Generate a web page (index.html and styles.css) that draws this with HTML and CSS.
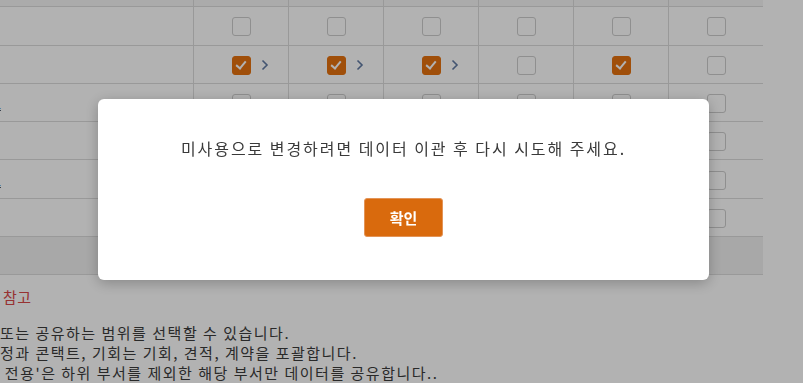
FILE: index.html
```html
<!DOCTYPE html>
<html>
<head>
<meta charset="utf-8">
<title>권한 설정</title>
<link rel="stylesheet" href="styles.css">
</head>
<body>
<div class="page">
  <div class="grid">
    <div class="row head">
      <div class="cell label"></div>
      <div class="cell"></div><div class="cell"></div><div class="cell"></div>
      <div class="cell"></div><div class="cell"></div><div class="cell"></div>
    </div>
    <div class="row">
      <div class="cell label"></div>
      <div class="cell"><span class="chk"></span></div>
      <div class="cell"><span class="chk"></span></div>
      <div class="cell"><span class="chk"></span></div>
      <div class="cell"><span class="chk"></span></div>
      <div class="cell"><span class="chk"></span></div>
      <div class="cell"><span class="chk"></span></div>
    </div>
    <div class="row">
      <div class="cell label"></div>
      <div class="cell"><span></span><span class="chk on"></span><span class="more"><svg width="8" height="12" viewBox="0 0 8 12"><path d="M1.5 1.5l4.5 4.5-4.5 4.5" fill="none" stroke="#607aa3" stroke-width="1.6"/></svg></span></div>
      <div class="cell"><span></span><span class="chk on"></span><span class="more"><svg width="8" height="12" viewBox="0 0 8 12"><path d="M1.5 1.5l4.5 4.5-4.5 4.5" fill="none" stroke="#607aa3" stroke-width="1.6"/></svg></span></div>
      <div class="cell"><span></span><span class="chk on"></span><span class="more"><svg width="8" height="12" viewBox="0 0 8 12"><path d="M1.5 1.5l4.5 4.5-4.5 4.5" fill="none" stroke="#607aa3" stroke-width="1.6"/></svg></span></div>
      <div class="cell"><span class="chk"></span></div>
      <div class="cell"><span class="chk on"></span></div>
      <div class="cell"><span class="chk"></span></div>
    </div>
    <div class="row">
      <div class="cell label"><span class="cut">콘택트</span></div>
      <div class="cell"><span class="chk"></span></div>
      <div class="cell"><span class="chk"></span></div>
      <div class="cell"><span class="chk"></span></div>
      <div class="cell"><span class="chk"></span></div>
      <div class="cell"><span class="chk"></span></div>
      <div class="cell"><span class="chk"></span></div>
    </div>
    <div class="row">
      <div class="cell label"></div>
      <div class="cell"><span class="chk"></span></div>
      <div class="cell"><span class="chk"></span></div>
      <div class="cell"><span class="chk"></span></div>
      <div class="cell"><span class="chk"></span></div>
      <div class="cell"><span class="chk"></span></div>
      <div class="cell"><span class="chk"></span></div>
    </div>
    <div class="row">
      <div class="cell label"><span class="cut">콘택트</span></div>
      <div class="cell"><span class="chk"></span></div>
      <div class="cell"><span class="chk"></span></div>
      <div class="cell"><span class="chk"></span></div>
      <div class="cell"><span class="chk"></span></div>
      <div class="cell"><span class="chk"></span></div>
      <div class="cell"><span class="chk"></span></div>
    </div>
    <div class="row">
      <div class="cell label"></div>
      <div class="cell"><span class="chk"></span></div>
      <div class="cell"><span class="chk"></span></div>
      <div class="cell"><span class="chk"></span></div>
      <div class="cell"><span class="chk"></span></div>
      <div class="cell"><span class="chk"></span></div>
      <div class="cell"><span class="chk"></span></div>
    </div>
    <div class="row foot">
      <div class="cell label"></div>
      <div class="cell"></div><div class="cell"></div><div class="cell"></div>
      <div class="cell"></div><div class="cell"></div><div class="cell"></div>
    </div>
  </div>

  <div class="notes">
    <p class="notes-title">참고</p>
    <p>또는 공유하는 범위를 선택할 수 있습니다.</p>
    <p>정과 콘택트, 기회는 기회, 견적, 계약을 포괄합니다.</p>
    <p>&nbsp;전용'은 하위 부서를 제외한 해당 부서만 데이터를 공유합니다..</p>
  </div>
</div>

<div class="dim"></div>
<div class="modal">
  <p class="modal-msg">미사용으로 변경하려면 데이터 이관 후 다시 시도해 주세요.</p>
  <button class="btn-ok" type="button">확인</button>
</div>
</body>
</html>
```

FILE: styles.css
```css
body {
  margin: 0;
  background: #ffffff;
  font-family: "Noto Sans CJK KR", "Noto Sans", sans-serif;
  overflow: hidden;
}
.page {
  margin-top: -31px;
  width: 803px;
}
.grid {
  width: 763px;
}
.row {
  display: grid;
  grid-template-columns: 193px repeat(6, 95px);
  height: 38.3px;
}
.row.head {
  background: #f5f5f5;
}
.row.foot {
  background: #f1f1f1;
}
.cell {
  box-sizing: border-box;
  border-bottom: 1px solid #dcdcdc;
  border-left: 1px solid #dcdcdc;
  display: grid;
  grid-template-columns: 1fr auto 1fr;
  align-items: center;
  justify-items: center;
  padding-top: 2px;
}
.cell > .chk:only-child {
  grid-column: 2;
}
.cell.label {
  border-left: none;
  display: flex;
  justify-content: flex-start;
  font-size: 13px;
  color: #3d4a5c;
  overflow: hidden;
}
.cut {
  margin-left: -35px;
  white-space: nowrap;
  text-decoration: underline;
}
.chk {
  box-sizing: border-box;
  width: 19px;
  height: 19px;
  border: 1.5px solid #cdcdcd;
  border-radius: 3px;
  background: #ffffff;
}
.chk.on {
  background: #e5720f;
  border-color: #e5720f;
  position: relative;
}
.chk.on::after {
  content: "";
  position: absolute;
  left: 5px;
  top: 2px;
  width: 4px;
  height: 8px;
  border: solid #ffffff;
  border-width: 0 2px 2px 0;
  transform: rotate(40deg);
}
.more {
  justify-self: start;
  margin-left: 10px;
  display: flex;
}
.notes {
  padding: 12px 0 0 0;
  font-size: 15px;
  letter-spacing: 1.5px;
  color: #3c3c3c;
}
.notes p {
  margin: 0;
  line-height: 20px;
  white-space: nowrap;
}
.notes .notes-title {
  color: #d94848;
  margin: 0 0 16px 3px;
  font-size: 15px;
  letter-spacing: 0.5px;
}
.dim {
  position: fixed;
  inset: 0;
  background: rgba(0, 0, 0, 0.3);
}
.modal {
  position: fixed;
  left: 98px;
  top: 99px;
  width: 611px;
  height: 181px;
  box-sizing: border-box;
  background: #ffffff;
  border-radius: 6px;
  box-shadow: 0 3px 14px rgba(0, 0, 0, 0.25);
  display: flex;
  flex-direction: column;
  align-items: center;
  padding-top: 38px;
}
.modal-msg {
  margin: 0;
  font-size: 16px;
  line-height: 22px;
  letter-spacing: 1.95px;
  color: #3a3a3a;
}
.btn-ok {
  margin-top: 39px;
  width: 79px;
  height: 39px;
  background: #d96a0d;
  border: 1px solid #e39457;
  border-radius: 3px;
  color: #ffffff;
  font-family: "Noto Sans CJK KR", sans-serif;
  font-size: 15px;
  font-weight: 700;
}
```
